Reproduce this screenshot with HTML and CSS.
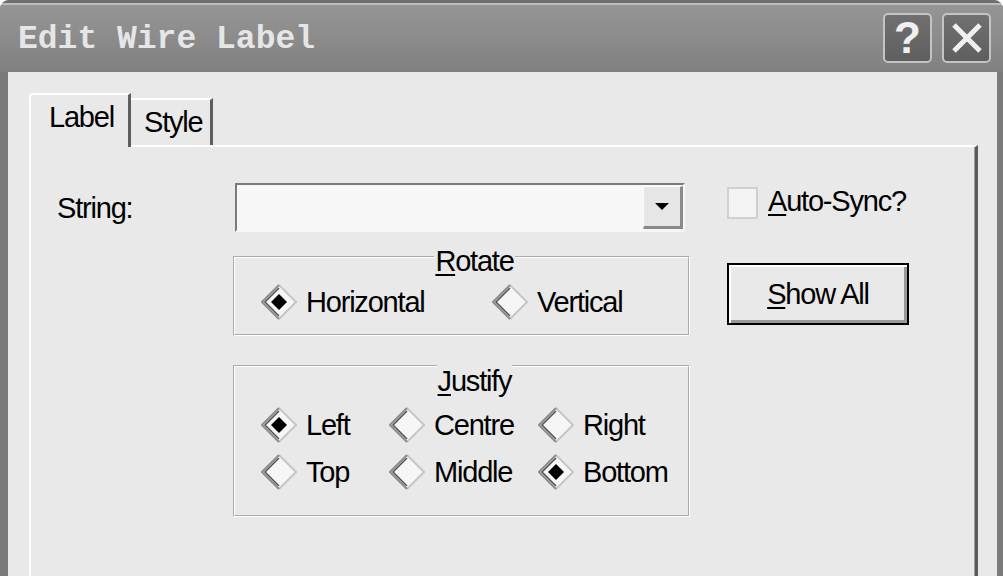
FILE: index.html
```html
<!DOCTYPE html>
<html lang="en">
<head>
<meta charset="utf-8">
<title>Edit Wire Label</title>
<link rel="stylesheet" href="styles.css">
</head>
<body>
<svg class="defs" width="0" height="0" aria-hidden="true">
  <defs>
    <symbol id="dia" viewBox="0 0 36 36">
      <polygon points="18,1 35,18 18,35 1,18" fill="#f6f6f6"/>
      <polyline points="18,1 35,18 18,35" fill="none" stroke="#c6c6c6" stroke-width="2"/>
      <polyline points="18,35 1,18 18,1" fill="none" stroke="#8c8c8c" stroke-width="2"/>
      <polyline points="18,32 4,18 18,4" fill="none" stroke="#505050" stroke-width="1.5"/>
    </symbol>
    <symbol id="dot" viewBox="0 0 36 36">
      <polygon points="18,10 26,18 18,26 10,18" fill="#000"/>
    </symbol>
  </defs>
</svg>
<div class="window">
  <div class="titlebar">
    <div class="title">Edit Wire Label</div>
    <div class="tb-btn help">?</div>
    <div class="tb-btn close">
      <svg width="30" height="30" viewBox="0 0 30 30"><path d="M2 2 L28 28 M28 2 L2 28" stroke="#f0f0f0" stroke-width="5" fill="none"/></svg>
    </div>
  </div>
  <div class="client">
    <div class="tabs">
      <div class="tab active">Label</div>
      <div class="tab">Style</div>
    </div>
    <div class="panel">
      <div class="form">
        <div class="lbl">String:</div>
        <div class="combo">
          <div class="combo-btn">
            <svg width="14" height="8" viewBox="0 0 14 8"><polygon points="0,0 14,0 7,7" fill="#000"/></svg>
          </div>
        </div>
        <div class="side">
          <div class="check-row"><span class="checkbox"></span><span class="check-text"><u>A</u>uto-Sync?</span></div>
          <div class="btn"><span><u>S</u>how All</span></div>
        </div>
        <fieldset class="group rotate">
          <legend><u>R</u>otate</legend>
          <div class="opts opts-rot">
            <div class="radio"><svg class="dia" width="36" height="36"><use href="#dia"/><use href="#dot"/></svg><span>Horizontal</span></div>
            <div class="radio"><svg class="dia" width="36" height="36"><use href="#dia"/></svg><span>Vertical</span></div>
          </div>
        </fieldset>
        <fieldset class="group justify">
          <legend><u>J</u>ustify</legend>
          <div class="opts opts-just">
            <div class="radio"><svg class="dia" width="36" height="36"><use href="#dia"/><use href="#dot"/></svg><span>Left</span></div>
            <div class="radio"><svg class="dia" width="36" height="36"><use href="#dia"/></svg><span>Centre</span></div>
            <div class="radio"><svg class="dia" width="36" height="36"><use href="#dia"/></svg><span>Right</span></div>
            <div class="radio"><svg class="dia" width="36" height="36"><use href="#dia"/></svg><span>Top</span></div>
            <div class="radio"><svg class="dia" width="36" height="36"><use href="#dia"/></svg><span>Middle</span></div>
            <div class="radio"><svg class="dia" width="36" height="36"><use href="#dia"/><use href="#dot"/></svg><span>Bottom</span></div>
          </div>
        </fieldset>
      </div>
    </div>
  </div>
</div>
</body>
</html>
```
FILE: styles.css
```css
* { box-sizing: border-box; }

html, body {
  margin: 0;
  padding: 0;
  background: #ffffff;
}

body {
  font-family: "Liberation Sans", Arial, sans-serif;
  font-size: 29px;
  line-height: 28px;
  letter-spacing: -1.2px;
  color: #000;
}

.defs { position: absolute; width: 0; height: 0; overflow: hidden; }

.window {
  width: 1003px;
  height: 576px;
  display: flex;
  flex-direction: column;
  background: #7a7a7a;
  border-radius: 9px 9px 0 0;
  overflow: hidden;
}

.titlebar {
  height: 72px;
  flex: none;
  display: flex;
  align-items: flex-start;
  padding: 0 12px 0 18px;
  background: linear-gradient(to bottom,
    #6f6f6f 0, #6f6f6f 3px,
    #bcbcbc 3px, #bcbcbc 5px,
    #959595 5px, #8b8b8b 55%, #808080 100%);
}

.title {
  flex: 1;
  padding-top: 23px;
  font-family: "Liberation Mono", "Courier New", monospace;
  font-weight: bold;
  font-size: 33px;
  line-height: 33px;
  letter-spacing: 0;
  color: #e6e6e6;
  white-space: nowrap;
}

.tb-btn {
  width: 49px;
  height: 50px;
  margin-top: 13px;
  border: 2px solid #c4c4c4;
  border-radius: 5px;
  background: linear-gradient(to bottom, #707070, #5f5f5f);
  display: flex;
  align-items: center;
  justify-content: center;
  color: #f0f0f0;
}

.help {
  margin-right: 10px;
  font-weight: bold;
  font-size: 44px;
  line-height: 44px;
  letter-spacing: 0;
}

.client {
  flex: 1;
  margin: 0 6px 0 8px;
  background: #e9e9e9;
  padding: 21px 19px 0 21px;
  display: flex;
  flex-direction: column;
  min-height: 0;
}

.tabs {
  display: flex;
  align-items: flex-end;
  flex: none;
}

.tab {
  height: 47px;
  width: 82px;
  border-top: 2px solid #ffffff;
  border-right: 3px solid #5e5e5e;
  padding: 8px 0 0 13px;
  background: #e9e9e9;
  white-space: nowrap;
}

.tab.active {
  height: 54px;
  width: 102px;
  border-left: 2px solid #ffffff;
  border-radius: 4px 0 0 0;
  padding-left: 18px;
  margin-bottom: -2px;
  position: relative;
  z-index: 1;
}

.panel {
  flex: 1;
  border-top: 2px solid #ffffff;
  border-left: 2px solid #ffffff;
  border-right: 3px solid #5a5a5a;
  box-shadow: inset -1px 0 0 #a0a0a0;
  padding: 36px 0 0 26px;
}

.form {
  display: grid;
  grid-template-columns: 139px 457px 182px;
  column-gap: 37px;
  align-items: start;
}

.lbl {
  grid-column: 1;
  grid-row: 1;
  align-self: center;
  white-space: nowrap;
}

.combo {
  grid-column: 2;
  grid-row: 1;
  margin-left: 2px;
  width: 450px;
  height: 49px;
  border: 2px solid;
  border-color: #7b7b7b #f6f6f6 #f6f6f6 #7b7b7b;
  background: #f7f7f7;
  display: flex;
  justify-content: flex-end;
  padding: 1px 0 1px 0;
}

.combo-btn {
  width: 40px;
  height: 43px;
  background: #e6e6e6;
  border-top: 1px solid #fbfbfb;
  border-left: 1px solid #fbfbfb;
  border-right: 3px solid #8a8a8a;
  border-bottom: 3px solid #8a8a8a;
  display: flex;
  align-items: center;
  justify-content: center;
}

.side {
  grid-column: 3;
  grid-row: 1 / span 3;
  display: flex;
  flex-direction: column;
}

.check-row {
  margin-top: 4px;
  display: flex;
  align-items: flex-start;
}

.checkbox {
  width: 31px;
  height: 32px;
  border: 2px solid #d0d0d0;
  background: #f4f4f4;
  flex: none;
}

.check-text {
  margin-left: 10px;
  white-space: nowrap;
}

.btn {
  margin-top: 44px;
  width: 182px;
  height: 62px;
  border: 2px solid #000;
  background: #e9e9e9;
  box-shadow: inset 2px 2px 0 #ffffff, inset -3px -3px 0 #999999;
  display: flex;
  align-items: center;
  justify-content: center;
  white-space: nowrap;
}

.group {
  grid-column: 2;
  margin: 0;
  min-width: 0;
  border: 2px groove #ffffff;
}

.group legend {
  margin: 0 auto;
  padding: 9px 1px 0 1px;
  line-height: 28px;
}

.rotate {
  grid-row: 2;
  margin-top: 6px;
  padding: 9px 0 14px 26px;
}

.justify {
  grid-row: 3;
  padding: 12px 0 25px 26px;
}

.justify legend {
  padding-top: 31px;
}

.opts {
  display: grid;
  row-gap: 11px;
}

.opts-rot { grid-template-columns: 231px auto; }
.opts-just { grid-template-columns: 128px 149px auto; }

.radio {
  display: flex;
  align-items: center;
  gap: 9px;
  height: 36px;
  white-space: nowrap;
}

.dia { flex: none; display: block; }

u {
  text-decoration-thickness: 2px;
  text-underline-offset: 3px;
}
```
